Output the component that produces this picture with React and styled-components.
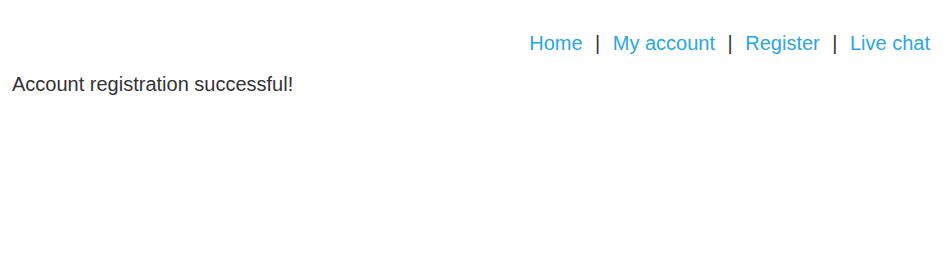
import React from 'react';
import styled, {createGlobalStyle} from 'styled-components';

const Global = createGlobalStyle`
  html, body {
    margin: 0;
    padding: 0;
    background: #fff;
  }
  body {
    font-family: "Liberation Sans", Arial, sans-serif;
    color: #333;
  }
`;

const Page = styled.div`
  padding: 30px 17px 0 12px;
`;

const Nav = styled.nav`
  display: flex;
  justify-content: flex-end;
  align-items: center;
  font-size: 20px;
  line-height: 26px;
`;

const Link = styled.a`
  color: #29a8e0;
  text-decoration: none;
`;

const Sep = styled.span`
  color: #333;
  margin: 0 12.5px;
`;

const Message = styled.p`
  margin: 15px 0 0;
  font-size: 20px;
  line-height: 26px;
`;

const links = ['Home', 'My account', 'Register', 'Live chat'];

export default function App() {
  return (
    <Page>
      <Global/>
      <Nav>
        {links.map((l, i) => (
          <React.Fragment key={l}>
            {i > 0 && <Sep>|</Sep>}
            <Link href="#">{l}</Link>
          </React.Fragment>
        ))}
      </Nav>
      <Message>Account registration successful!</Message>
    </Page>
  );
}
